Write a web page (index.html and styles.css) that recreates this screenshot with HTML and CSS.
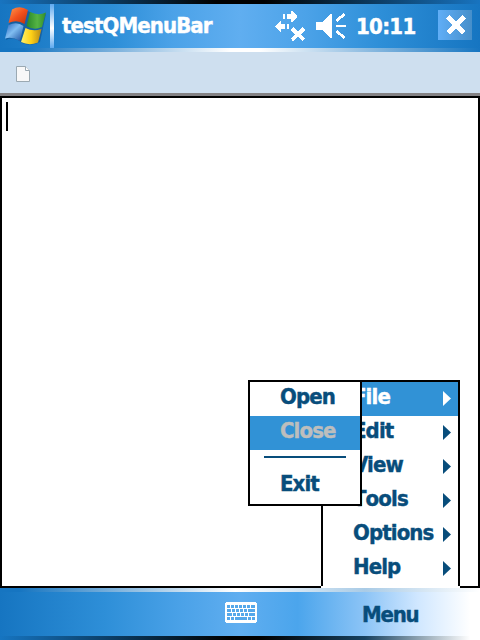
FILE: index.html
```
<!DOCTYPE html>
<html lang="en">
<head>
<meta charset="utf-8">
<title>testQMenuBar</title>
<link rel="stylesheet" href="styles.css">
</head>
<body>
<div class="screen">
  <header class="titlebar">
    <svg class="flag" width="44" height="44" viewBox="3 4 44 44">
      <defs>
        <linearGradient id="r" x1="0" y1="0" x2="1" y2="1"><stop offset="0" stop-color="#ff9a50"/><stop offset=".5" stop-color="#f2501c"/><stop offset="1" stop-color="#b83010"/></linearGradient>
        <linearGradient id="g"><stop offset="0" stop-color="#278629"/><stop offset=".55" stop-color="#55b444"/><stop offset="1" stop-color="#318d2b"/></linearGradient>
        <linearGradient id="b" x1="0" y1="0" x2="1" y2="1"><stop offset="0" stop-color="#2763bd"/><stop offset=".45" stop-color="#80bdf1"/><stop offset="1" stop-color="#164a9b"/></linearGradient>
        <linearGradient id="y"><stop offset="0" stop-color="#fff269"/><stop offset=".5" stop-color="#ffd016"/><stop offset="1" stop-color="#b58817"/></linearGradient>
      </defs>
      <path fill="#104f88" opacity=".6" d="M12 10Q20 7 28 11Q38 17 46 14L40 42Q31 47 22 43Q14 36 6 40Z"/>
      <path fill="url(#r)" d="M12 9.500Q20 5 28 10L24.500 24Q17 19 8.500 23Z"/>
      <path fill="url(#g)" d="M30 12Q38 16 46 12.500L42 27Q34 31 26.500 26Z"/>
      <path fill="url(#b)" d="M8.500 25Q17 21 23.500 26L20 41Q12 36 5 38.500Z"/>
      <path fill="url(#y)" d="M25.500 28Q33 32 41.500 29L38 42.500Q29 46 21 42Z"/>
    </svg>
    <span class="divider"></span>
    <h1 class="title">testQMenuBar</h1>
    <svg class="status" width="74" height="34" viewBox="274 9 74 34" fill="#fff" shape-rendering="crispEdges">
      <path d="M283 14h2v5h-2zM287 14h4v-3h1l5 5v1l-5 5h-1v-3h-4zM275 26l6-6v4h4v5h-4v3h-1zM287 24h2v5h-2zM316 22h6l8-8h2v24h-2l-8-8h-6zM336 25h10v2h-10z"/>
      <path stroke="#fff" stroke-width="3.800" d="M292 28.500l12 11.500M304 28.500l-12 11.500"/>
      <path stroke="#fff" stroke-width="2.800" d="M336.500 21l8-7M336.500 31l8 7"/>
    </svg>
    <span class="clock">10:11</span>
    <button class="close" aria-label="Close window"><svg width="34" height="30" viewBox="438 10 34 30" shape-rendering="crispEdges"><path stroke="#fff" stroke-width="5.500" d="M448 17l16 16M464 17l-16 16"/></svg></button>
  </header>
  <div class="toolbar">
    <svg width="14" height="17" viewBox="0 0 14 17"><path d="M.5 .5h9l4 4V15.500H.5z" fill="#f8f8f8" stroke="#9ba9b2"/><path d="M9.500 .5v4h4" fill="#fff" stroke="#9ba9b2"/></svg>
  </div>
  <main class="editor"><span class="caret"></span></main>
  <footer class="bottombar">
    <svg class="keyboard" width="32" height="21" viewBox="0 0 32 21" shape-rendering="crispEdges">
      <path fill="#fff" d="M1 0h30v1h1v19h-1v1H1v-1H0V1h1z"/>
      <path fill="#55a8ea" d="M2 3h3v3H2zM6 3h3v3H6zM10 3h3v3h-3zM14 3h3v3h-3zM18 3h3v3h-3zM22 3h3v3h-3zM26 3h4v3h-4zM2 7h4v3H2zM7 7h3v3H7zM11 7h3v3h-3zM15 7h3v3h-3zM19 7h3v3h-3zM23 7h7v3h-7zM2 11h5v3H2zM8 11h3v3H8zM12 11h3v3h-3zM16 11h3v3h-3zM20 11h3v3h-3zM24 11h6v3h-6zM2 15h3v3H2zM6 15h3v3H6zM10 15h12v3H10zM23 15h3v3h-3zM27 15h3v3h-3z"/>
    </svg>
    <span class="softkey">Menu</span>
  </footer>
  <nav class="menu">
    <div class="item active"><span class="label">File</span><i class="arrow"></i></div>
    <div class="item"><span class="label">Edit</span><i class="arrow"></i></div>
    <div class="item"><span class="label">View</span><i class="arrow"></i></div>
    <div class="item"><span class="label tools">Tools</span><i class="arrow"></i></div>
    <div class="item"><span class="label">Options</span><i class="arrow"></i></div>
    <div class="item"><span class="label">Help</span><i class="arrow"></i></div>
  </nav>
  <nav class="submenu">
    <div class="item"><span class="label">Open</span></div>
    <div class="item active disabled"><span class="label">Close</span></div>
    <hr class="separator">
    <div class="item exit"><span class="label">Exit</span></div>
  </nav>
</div>
</body>
</html>
```
FILE: styles.css
```
* { box-sizing: border-box; }
body { margin: 0; font: bold 22px/34px "DejaVu Sans Condensed", "DejaVu Sans", sans-serif; font-stretch: condensed; letter-spacing: -0.9px; -webkit-text-stroke: 0.4px currentColor; color: #084d7b; }
.screen { position: relative; width: 480px; height: 640px; display: flex; flex-direction: column; overflow: hidden; background: #fff; }
.titlebar {
  height: 52px; flex: none; display: flex; align-items: flex-start; padding: 4px 8px 4px 3px; color: #fff;
  background:
    linear-gradient(90deg, #1874c0, #000 45%, #000 55%, #1874c0) 0 0 / 100% 4px no-repeat,
    linear-gradient(90deg, #1675c1 5%, #fff 48%, #fff 54%, #1675c1) 0 48px / 100% 4px no-repeat,
    linear-gradient(90deg, #1675c1, #2e8fd8 24%, #4ba2e8 36%, #60aef0 50%, #4ba2e8 64%, #2e8fd8 79%, #1675c1);
}
.flag { flex: none; }
.divider { width: 4px; height: 44px; margin-left: 3px; background: linear-gradient(#5eaaf0, #fff 55%, #5eaaf0); }
.title { margin: 5px 0 0 8px; width: 212px; font: inherit; white-space: nowrap; }
.status { flex: none; margin-top: 5px; }
.clock { width: 82px; margin: 6px 0 0 8px; letter-spacing: -0.7px; }
.close { width: 34px; height: 30px; margin-top: 6px; padding: 0; border: 0; background: linear-gradient(90deg, #60aef7, #468fca); }
.close svg, .toolbar svg { display: block; }
.toolbar { height: 44px; flex: none; padding: 14px 16px; background: #cedfef; border-bottom: 3px solid #848284; }
.editor { height: 492px; flex: none; border: 2px solid #000; background: #fff; padding: 4px; }
.caret { display: block; width: 2px; height: 29px; background: #000; }
.bottombar {
  height: 52px; flex: none; display: flex; padding-left: 225px;
  background:
    linear-gradient(90deg, #1675c1 4%, #fff 49%, #a9cbe6 76%, #fff) 0 0 / 100% 4px no-repeat,
    linear-gradient(90deg, #1675c1, #000 48%, #000 54%, #17415f 76%, #fff 98%) 0 48px / 100% 4px no-repeat,
    linear-gradient(90deg, #1675c1, #2e8fd8 22%, #4ba2e8 38%, #60aef0 50%, #4ba5ec 62%, #8cc4f6 76%, #d0e7ff 87%, #fff 98%);
}
.keyboard { margin-top: 14px; flex: none; }
.softkey { margin: 10px 0 0 105px; letter-spacing: -1.2px; }
.menu, .submenu { position: absolute; top: 380px; border: 2px solid #000; background: #fff; }
.menu { left: 321px; width: 139px; height: 208px; border-bottom: 0; }
.menu::after { content: ""; position: absolute; left: -2px; right: -2px; bottom: 0; height: 2px; background: #fff; }
.submenu { left: 248px; width: 114px; height: 126px; }
.item { height: 34px; display: flex; justify-content: space-between; padding: 0 7px 0 30px; line-height: 29px; }
.exit { line-height: 32px; }
.tools { font-kerning: none; }
.active { background: #3192d6; color: #fff; }
.disabled { color: #bdbebd; }
.arrow { width: 8px; height: 15px; margin-top: 9px; background: currentColor; clip-path: polygon(0 0, 100% 50%, 0 100%); }
.separator { width: 82px; height: 2px; margin: 6px 0 10px 14px; border: 0; background: #084d7b; }
```
